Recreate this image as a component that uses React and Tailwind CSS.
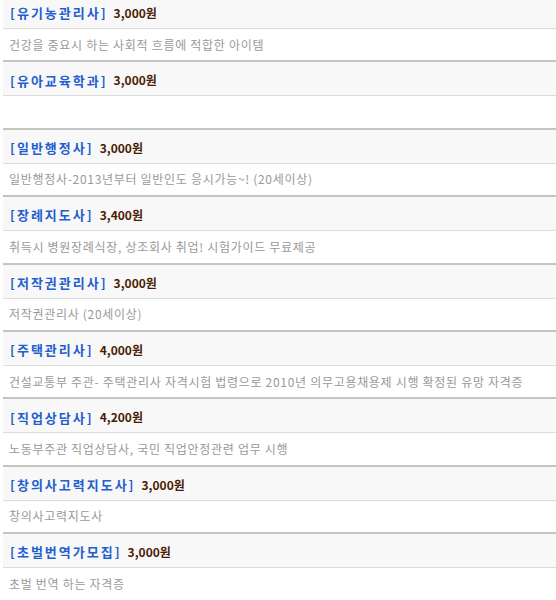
import React from "react";

const items = [
    { name: "유기농관리사", price: "3,000원", desc: "건강을 중요시 하는 사회적 흐름에 적합한 아이템" },
    { name: "유아교육학과", price: "3,000원", desc: "" },
    { name: "일반행정사", price: "3,000원", desc: "일반행정사-2013년부터 일반인도 응시가능~! (20세이상)" },
    { name: "장례지도사", price: "3,400원", desc: "취득시 병원장례식장, 상조회사 취업! 시험가이드 무료제공" },
    { name: "저작권관리사", price: "3,000원", desc: "저작권관리사 (20세이상)" },
    { name: "주택관리사", price: "4,000원", desc: "건설교통부 주관- 주택관리사 자격시험 법령으로 2010년 의무고용채용제 시행 확정된 유망 자격증" },
    { name: "직업상담사", price: "4,200원", desc: "노동부주관 직업상담사, 국민 직업안정관련 업무 시행" },
    { name: "창의사고력지도사", price: "3,000원", desc: "창의사고력지도사" },
    { name: "초벌번역가모집", price: "3,000원", desc: "초벌 번역 하는 자격증" },
];

const font = { fontFamily: '"Noto Sans CJK KR", "Noto Sans", sans-serif' };

export default function App() {
    return (
        <div className="bg-white w-[556px] h-[600px] overflow-hidden pl-[3px]" style={font}>
            <div className="-mt-[5px]">
                {items.map((it, i) => (
                    <div key={i} className="border-b-2 border-[#c4c4c4]">
                        <div className="h-[34px] bg-[#f8f8f8] border-b border-[#dcdcdc] flex items-center pl-[7px] gap-[6px] pt-[3px]">
                            <span className="text-[13px] font-bold text-[#1f5fcf] tracking-[2px]">
                                [{it.name}]
                            </span>
                            <span className="text-[12px] font-bold text-[#4a1c05]">
                                {it.price}
                            </span>
                        </div>
                        <div className="h-[31.4px] flex items-center pl-[6px] text-[12px] text-[#999999] tracking-[0.7px]">
                            {it.desc}
                        </div>
                    </div>
                ))}
            </div>
        </div>
    );
}
